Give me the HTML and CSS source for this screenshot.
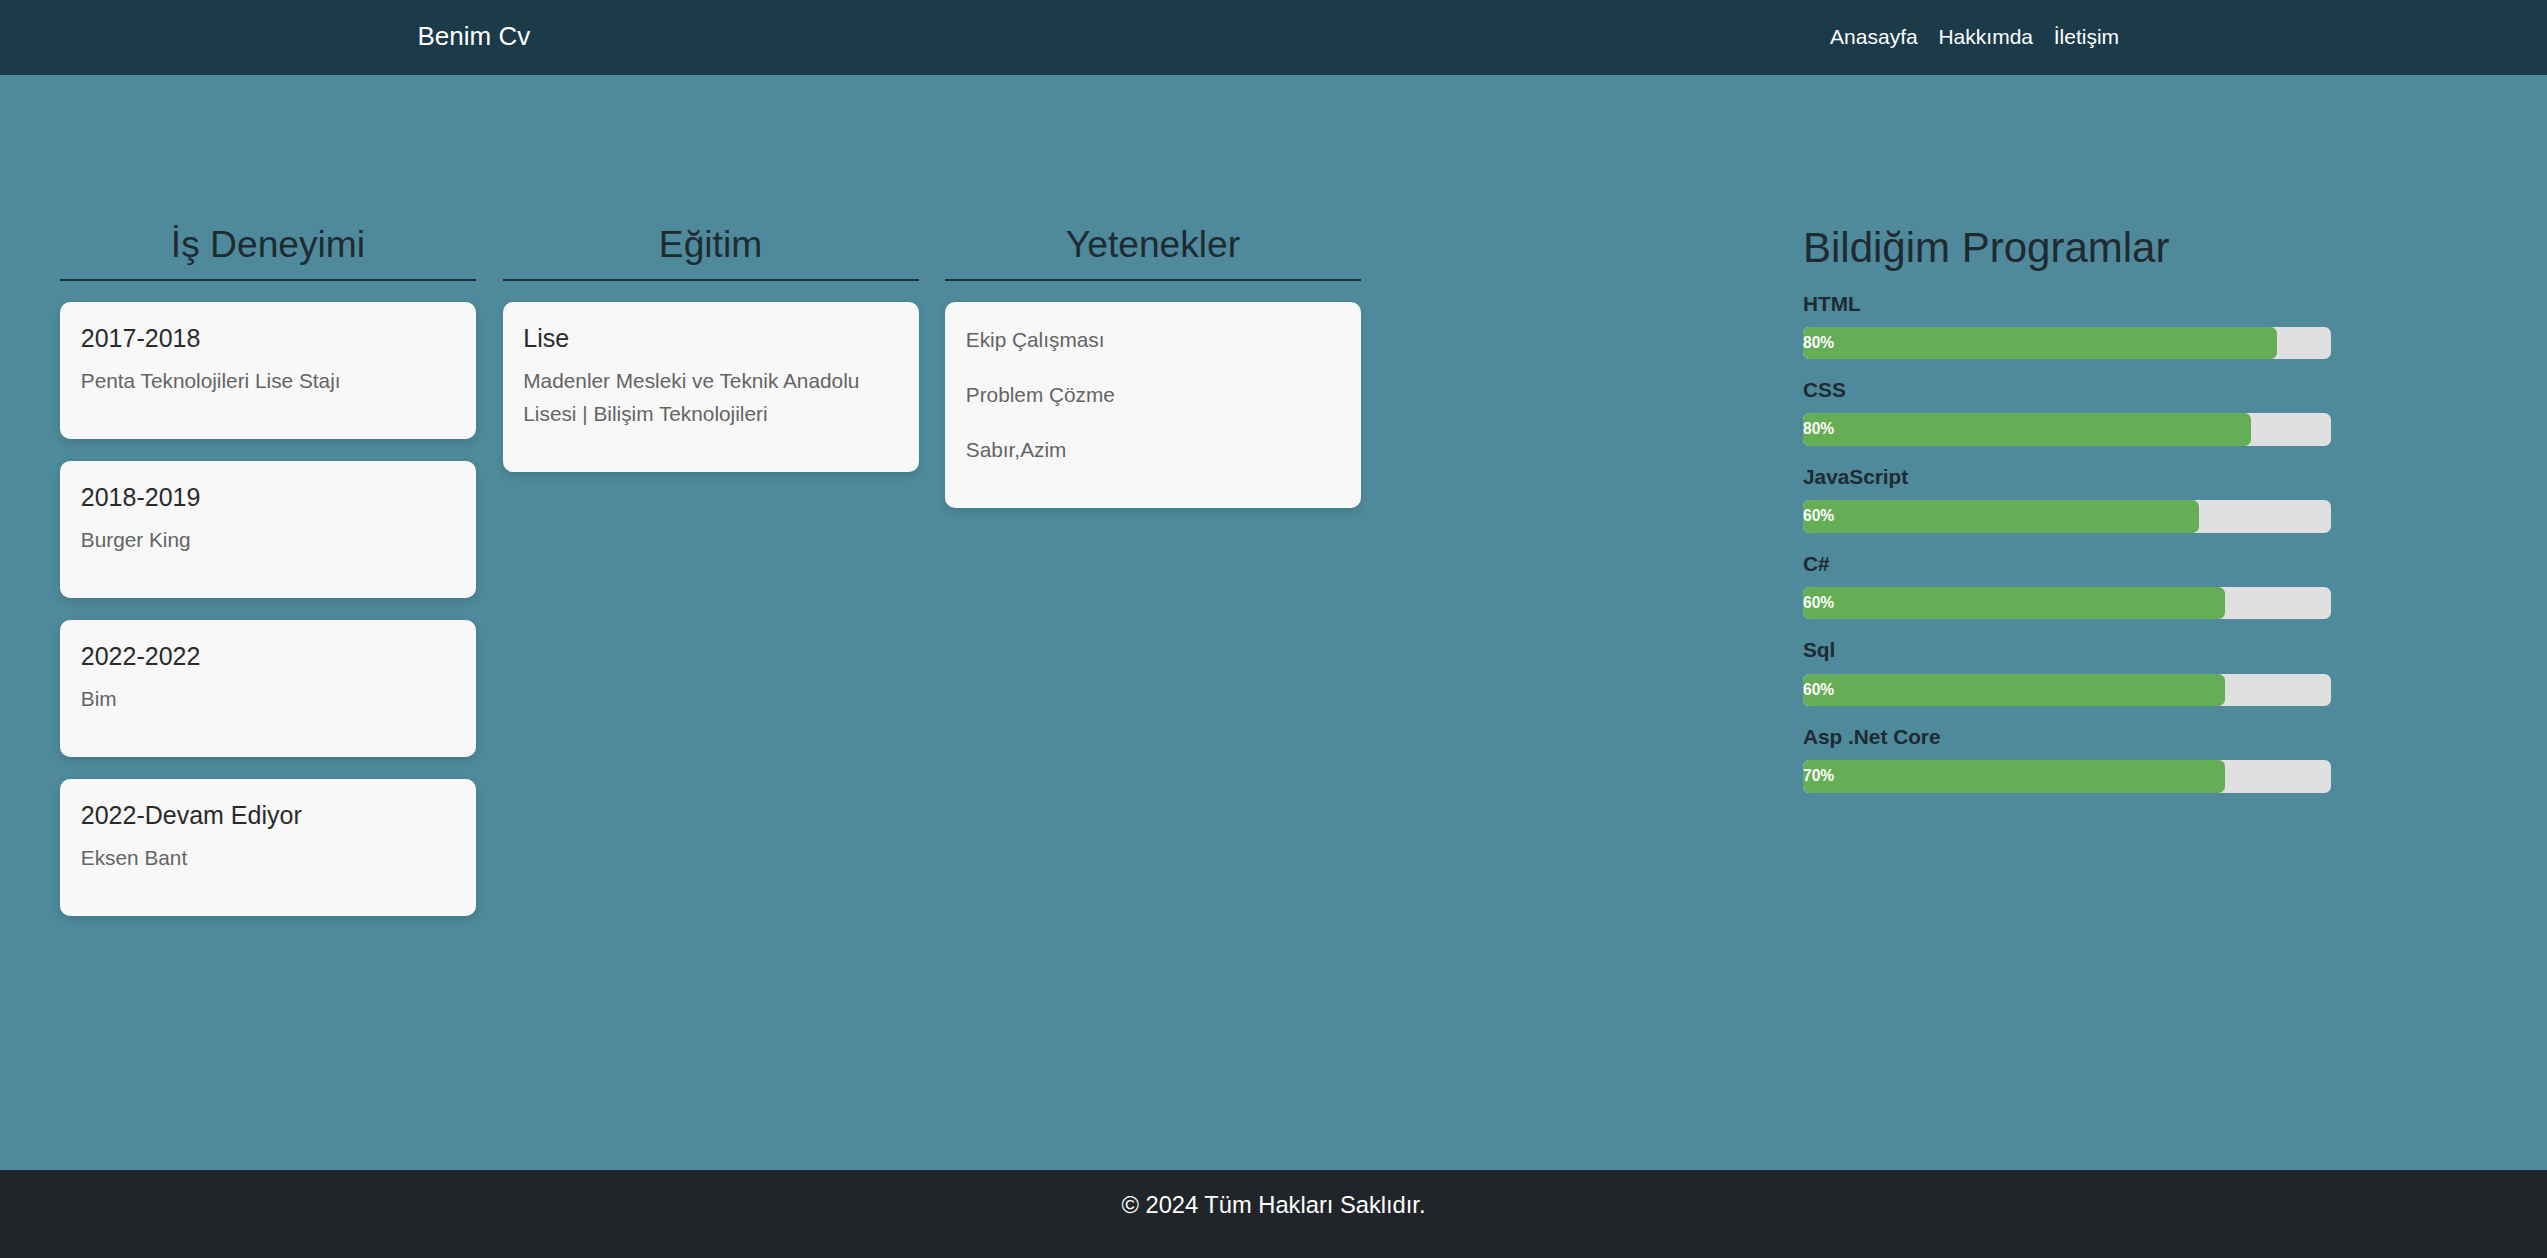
FILE: index.html
```html
<!DOCTYPE html>
<html lang="tr">
<head>
<meta charset="utf-8">
<title>Benim Cv</title>
<link rel="stylesheet" href="styles.css">
</head>
<body>
<header class="site-header">
  <div class="header-inner">
    <a class="brand" href="#">Benim Cv</a>
    <nav class="nav">
      <a class="nav-link" href="#">Anasayfa</a>
      <a class="nav-link" href="#">Hakkımda</a>
      <a class="nav-link" href="#">İletişim</a>
    </nav>
  </div>
</header>

<main class="main">
  <div class="columns">
    <section class="column">
      <h2 class="section-title">İş Deneyimi</h2>
      <div class="rule"></div>
      <div class="card">
        <h3 class="card-title">2017-2018</h3>
        <p class="card-text">Penta Teknolojileri Lise Stajı</p>
      </div>
      <div class="card">
        <h3 class="card-title">2018-2019</h3>
        <p class="card-text">Burger King</p>
      </div>
      <div class="card">
        <h3 class="card-title">2022-2022</h3>
        <p class="card-text">Bim</p>
      </div>
      <div class="card">
        <h3 class="card-title">2022-Devam Ediyor</h3>
        <p class="card-text">Eksen Bant</p>
      </div>
    </section>

    <section class="column">
      <h2 class="section-title">Eğitim</h2>
      <div class="rule"></div>
      <div class="card">
        <h3 class="card-title">Lise</h3>
        <p class="card-text">Madenler Mesleki ve Teknik Anadolu Lisesi | Bilişim Teknolojileri</p>
      </div>
    </section>

    <section class="column">
      <h2 class="section-title">Yetenekler</h2>
      <div class="rule"></div>
      <div class="card">
        <p class="card-text skill-item">Ekip Çalışması</p>
        <p class="card-text skill-item">Problem Çözme</p>
        <p class="card-text skill-item">Sabır,Azim</p>
      </div>
    </section>
  </div>

  <aside class="programs">
    <h2 class="programs-title">Bildiğim Programlar</h2>
    <div class="program">
      <div class="program-label">HTML</div>
      <div class="bar"><div class="bar-fill" style="width: 89.8%">80%</div></div>
    </div>
    <div class="program">
      <div class="program-label">CSS</div>
      <div class="bar"><div class="bar-fill" style="width: 84.8%">80%</div></div>
    </div>
    <div class="program">
      <div class="program-label">JavaScript</div>
      <div class="bar"><div class="bar-fill" style="width: 75%">60%</div></div>
    </div>
    <div class="program">
      <div class="program-label">C#</div>
      <div class="bar"><div class="bar-fill" style="width: 79.9%">60%</div></div>
    </div>
    <div class="program">
      <div class="program-label">Sql</div>
      <div class="bar"><div class="bar-fill" style="width: 79.9%">60%</div></div>
    </div>
    <div class="program">
      <div class="program-label">Asp .Net Core</div>
      <div class="bar"><div class="bar-fill" style="width: 79.9%">70%</div></div>
    </div>
  </aside>
</main>

<footer class="site-footer">
  <p class="footer-text">© 2024 Tüm Hakları Saklıdır.</p>
</footer>
</body>
</html>
```

FILE: styles.css
```css
* {
  box-sizing: border-box;
}

html, body {
  margin: 0;
  padding: 0;
}

body {
  font-family: "Liberation Sans", Arial, sans-serif;
  min-height: 100vh;
  display: flex;
  flex-direction: column;
  background: #4e8a9b;
  color: #212529;
}

/* Header */
.site-header {
  background: #1b3a4a;
  height: 75px;
  padding-bottom: 3px;
  display: flex;
  align-items: center;
  flex-shrink: 0;
}

.header-inner {
  width: 1712px;
  margin: 0 auto;
  display: flex;
  align-items: center;
  justify-content: space-between;
}

.brand {
  color: #ffffff;
  font-size: 26px;
  line-height: 39px;
  text-decoration: none;
}

.nav {
  display: flex;
  align-items: center;
}

.nav-link {
  color: #ffffff;
  font-size: 21px;
  line-height: 31px;
  padding: 0 10.4px;
  text-decoration: none;
}

/* Main */
.main {
  flex: 1;
  display: flex;
  align-items: flex-start;
  padding: 148px 0 0 60px;
}

.columns {
  display: grid;
  grid-template-columns: repeat(3, 416px);
  column-gap: 26.5px;
  align-items: start;
}

.column {
  display: flex;
  flex-direction: column;
}

.section-title {
  margin: 0;
  font-size: 37.2px;
  font-weight: 400;
  line-height: 43.7px;
  text-align: center;
  color: #1f2a31;
}

.rule {
  height: 2px;
  background: #1d303b;
  margin: 12.3px 0 21px;
}

.card {
  background: #f8f8f9;
  border-radius: 10px;
  padding: 20.8px;
  margin-bottom: 22px;
  box-shadow: 0 4px 8px rgba(0, 0, 0, 0.12);
}

.card-title {
  margin: 0 0 11.3px;
  font-size: 25px;
  font-weight: 400;
  line-height: 1.2;
  color: #2a2a2a;
}

.card-text {
  margin: 0 0 20.8px;
  font-size: 20.8px;
  line-height: 1.6;
  color: #646464;
}

.skill-item {
  margin-bottom: 21.7px;
}

/* Programs */
.programs {
  width: 528px;
  margin-left: 442px;
}

.programs-title {
  margin: 0 0 14.5px;
  font-size: 42px;
  font-weight: 400;
  line-height: 50px;
  color: #1f2a31;
}

.program {
  margin-bottom: 15px;
}

.program-label {
  font-size: 20.8px;
  font-weight: 700;
  line-height: 31.2px;
  margin-bottom: 8px;
  color: #1f2a31;
}

.bar {
  height: 32.5px;
  background: #e0e0e0;
  border-radius: 6.5px;
  overflow: hidden;
}

.bar-fill {
  height: 100%;
  background: #65ae56;
  border-radius: 6.5px;
  color: #ffffff;
  font-size: 15.6px;
  font-weight: 700;
  line-height: 32.5px;
  white-space: nowrap;
}

/* Footer */
.site-footer {
  background: #212529;
  height: 88px;
  padding-top: 18px;
  flex-shrink: 0;
}

.footer-text {
  margin: 0;
  text-align: center;
  color: #ffffff;
  font-size: 23.7px;
  line-height: 35px;
}
```
